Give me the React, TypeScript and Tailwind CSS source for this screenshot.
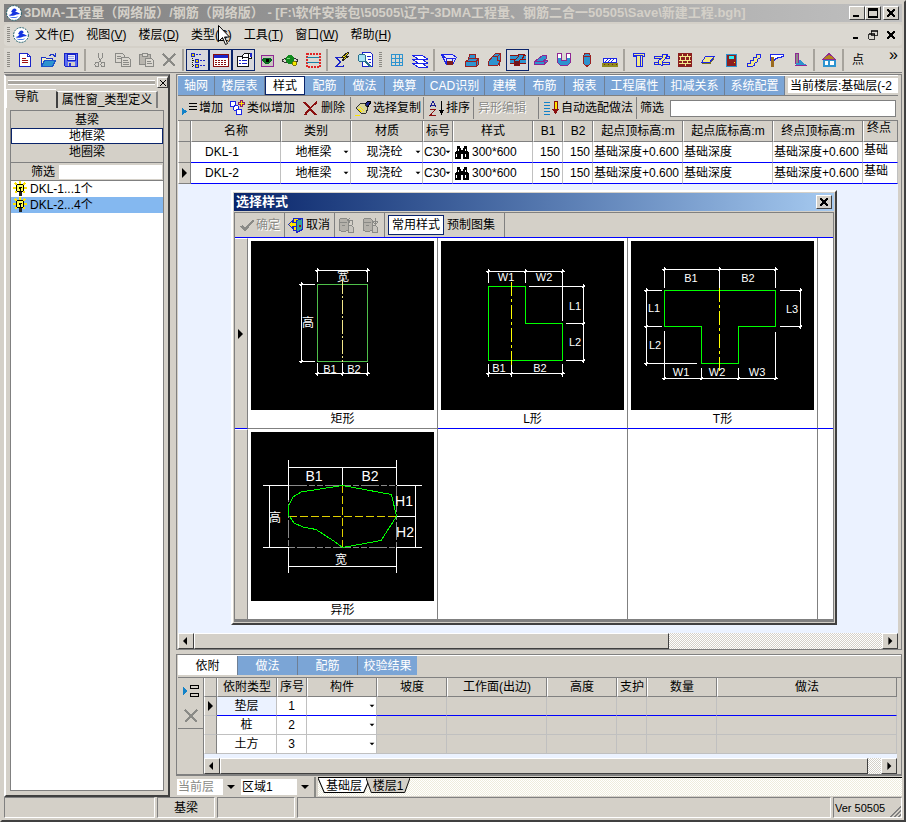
import type { ReactNode } from 'react'
import clsx from 'clsx'

const RAISED = 'border border-white border-r-[#404040] border-b-[#404040] bg-[#d4d0c8]'
const SUNKEN = 'border border-[#808080] border-r-white border-b-white'
const DITHER = 'bg-[repeating-conic-gradient(#ffffff_0_25%,#d4d0c8_0_50%)] bg-[length:2px_2px]'

function Icon({ children, className }: { children: ReactNode; className?: string }) {
  return (
    <svg
      className={clsx('shrink-0', className ?? 'size-4')}
      viewBox="0 0 16 16"
      fill="none"
      strokeWidth={1}
      shapeRendering="crispEdges"
      aria-hidden="true"
    >
      {children}
    </svg>
  )
}

function Logo() {
  return (
    <svg className="size-4 shrink-0" viewBox="0 0 16 16" aria-hidden="true">
      <circle cx="8" cy="8" r="7.4" fill="#fff" stroke="#1f5f6b" strokeDasharray="2 1" />
      <path d="M6.5 4.5c2-2 4.5-.5 4 1.3l-1.5.7c2 .3 4 1.5 5 2.5-3 .3-4 .6-6 1.5-1.5.5-4 .5-5.5-.5 2-.3 3-1 4-2.5L5 7z" fill="#1434e0" />
      <path d="M3 11.5c3 .8 6 .8 9.5-.3-2 2.3-6.5 2.6-9.5.3z" fill="#4a78f0" />
    </svg>
  )
}

function Grip() {
  return (
    <span className="flex w-[9px] shrink-0 justify-center">
      <span className="h-4 w-[3px] bg-[repeating-linear-gradient(#8c8a84_0_1px,#dbd8d1_1px_2px)]" />
    </span>
  )
}

function Arrow({ dir, className }: { dir: 'left' | 'right' | 'down'; className?: string }) {
  const d = { left: 'M6 1v8L2 5z', right: 'M3 0v10l5-5z', down: 'M1 3h8L5 7z' }[dir]
  return (
    <svg className={clsx('shrink-0', className ?? 'size-[10px]')} viewBox="0 0 10 10" aria-hidden="true">
      <path d={d} fill="#000" />
    </svg>
  )
}

/* ---------- main toolbar ---------- */

const icons: Record<string, ReactNode> = {
  新建: (
    <Icon>
      <path d="M2.5 1.5h8l3 3v10h-11z" fill="#fff" stroke="#1b25c8" />
      <path d="M10.5 1.5v3h3" stroke="#1b25c8" />
      <path d="M5 6.500h4M5 8.500h6M5 10.500h6" stroke="#a01010" />
    </Icon>
  ),
  打开: (
    <Icon>
      <path d="M1.5 14.5v-9h4l1 1h6v2" fill="#f5f0c8" stroke="#1b35c8" />
      <path d="M1.5 14.5l3-6h11l-3 6z" fill="#2d93cf" stroke="#1b55c8" />
      <path d="M9 3.5h1v-1h3v1h1v1h1M15.5 1v4" stroke="#1b35c8" />
    </Icon>
  ),
  保存: (
    <Icon>
      <path d="M1.5 1.5h13v13h-12l-1-1z" fill="#5a6cf0" stroke="#1622c8" />
      <path d="M4 2h8v6H4z" fill="#e8e8f8" stroke="#1622c8" />
      <path d="M5 4.5h6M5 6.5h6" stroke="#9aa6e8" />
      <path d="M5 10h7v4H5z" fill="#d4d0c8" />
      <path d="M6 11h2v3H6z" fill="#2433d8" />
    </Icon>
  ),
  剪切: (
    <Icon>
      <path d="M6.5 1v4l3 6M10.5 1v4l-4 6" stroke="#8a8a86" />
      <circle cx="5" cy="12.5" r="2" stroke="#8a8a86" />
      <circle cx="11" cy="12.5" r="2" stroke="#8a8a86" />
    </Icon>
  ),
  复制: (
    <Icon>
      <path d="M.5 1.5h7l2 2v7h-9z" stroke="#8a8a86" />
      <path d="M6.5 5.5h7l2 2v7h-9z" fill="#dbd8d1" stroke="#8a8a86" />
      <path d="M2 4.5h4M2 6.5h4M8 8.5h5M8 10.5h6M8 12.5h6" stroke="#8a8a86" />
    </Icon>
  ),
  粘贴: (
    <Icon>
      <path d="M1.5 2.5h11v10h-11z" fill="#b8b5ae" stroke="#8a8a86" />
      <path d="M4.5 1.5h5v3h-5z" fill="#dbd8d1" stroke="#8a8a86" />
      <path d="M7.5 6.5h6l2 2v6h-8z" fill="#dbd8d1" stroke="#8a8a86" />
      <path d="M9 9.5h4M9 11.5h5" stroke="#8a8a86" />
    </Icon>
  ),
  删除图元: (
    <Icon>
      <path d="M2 2l12 12M14 2L2 14" stroke="#8a8a86" strokeWidth={2} />
    </Icon>
  ),
  导航树: (
    <Icon>
      <path d="M2.5 4v10.500M3 8.500h2M3 13.500h2" stroke="#111" strokeDasharray="1 1" />
      <path d="M1 1h3v3H1zM5 7h3v3H5zM5 12h3v3H5z" fill="#e4d000" stroke="#1b25c8" />
      <path d="M6 2.500h5M10 8.500h6M10 13.500h6" stroke="#1b25c8" strokeDasharray="2 1" />
    </Icon>
  ),
  表格: (
    <Icon>
      <path d="M.5 2.5h15v12H.5z" fill="#fff" stroke="#8a0f0f" />
      <path d="M1 3h14v3H1z" fill="#1b25c8" />
      <path d="M2 8.5h12M2 10.5h12M2 12.5h12" stroke="#8a0f0f" strokeDasharray="2 1" />
    </Icon>
  ),
  属性: (
    <Icon>
      <path d="M1.5 4.5h11v10h-11z" fill="#fff" stroke="#111" />
      <path d="M3 8.5h2M3 11.5h2M6 8.5h5M6 11.5h5" stroke="#1b25c8" />
      <path d="M6 3.5l3-2h3v4H8l-2 1zM12 1h3v5h-3z" fill="#fff" stroke="#111" />
      <path d="M14 1h2v4h-2z" fill="#1b25c8" />
    </Icon>
  ),
  可见性: (
    <Icon>
      <path d="M2 3h12v11H2z" fill="#c9c6c0" stroke="#8f2794" strokeWidth={1} />
      <path d="M3 8l3-2h4l3 2-3 3H6z" fill="#0d7a1a" stroke="#062" />
      <path d="M7 7h3v3H7z" fill="#000" />
    </Icon>
  ),
  动态观察: (
    <Icon>
      <ellipse cx="8" cy="8.5" rx="7.5" ry="2.5" stroke="#333" />
      <circle cx="8" cy="7.5" r="4.5" fill="#118a1e" />
      <path d="M5 6h3v1H5z" fill="#7be07f" />
      <circle cx="12.5" cy="11.5" r="2" fill="#f4ea00" stroke="#7c7400" />
    </Icon>
  ),
  框选: (
    <Icon>
      <path d="M1.5 1.5h13v13h-13z" stroke="#e02525" strokeWidth={2} strokeDasharray="2 1" />
      <path d="M2 5.5h12M2 10.5h12" stroke="#1682a8" />
    </Icon>
  ),
  汇总计算: (
    <Icon>
      <path d="M9.5 7V5.500H1.500L6 10l-4.500 4.500h8V13" stroke="#1b25c8" />
      <path d="M2.500 5.500L7 10l-4 4" stroke="#1b25c8" />
      <path d="M14 0L8 5h3L8 9l7-5h-3l3-3z" fill="#ffe600" stroke="#222" />
    </Icon>
  ),
  查量: (
    <Icon>
      <path d="M5.5.5h8l2 2v12h-10z" fill="#fff" stroke="#1b25c8" />
      <path d="M10 4.5h4M11 7.5h3M12 10.5h2" stroke="#1b25c8" />
      <circle cx="5" cy="6" r="4" fill="#a8e4f4" stroke="#28708c" />
      <path d="M8 9l6 6" stroke="#28708c" strokeWidth={2} />
    </Icon>
  ),
  轴网: (
    <Icon>
      <path d="M2.5 2.5h11v11h-11zM6.5 2v12M10.5 2v12M2 6.5h12M2 10.5h12" stroke="#2d93cf" />
    </Icon>
  ),
  楼层: (
    <Icon>
      <path d="M.5 11.5h10l5 3.500H6z" fill="#fff" stroke="#1b25e8" />
      <path d="M.5 7.5h10l5 3.500H6z" fill="#fff" stroke="#1b25e8" />
      <path d="M.5 3.5h10l5 3.500H6z" fill="#fff" stroke="#1b25e8" />
    </Icon>
  ),
  基坑: (
    <Icon>
      <path d="M.5 2.5h11l4 3-4 7h-6z" fill="#e6e4f4" stroke="#1b25e8" />
      <path d="M1 3l4 3h10M5.500 6v5M11.500 6v4" stroke="#1b25e8" />
      <path d="M6 9h6v4H6z" fill="#7c1c1c" />
    </Icon>
  ),
  独基: (
    <Icon>
      <path d="M5.5 2.5h6v4h3v6l-2 2h-11v-5l3-2z" fill="#2d93cf" stroke="#9a2020" />
      <path d="M2 9.5h10v5M5 6.5h6M12 9l3-2" stroke="#9a2020" />
    </Icon>
  ),
  条基: (
    <Icon>
      <path d="M8.5 1.5h5v8l-3 4h-9v-4l4-5z" fill="#2d93cf" stroke="#9a2020" />
      <path d="M5 4.5h5v4h2v5M10 5l3-3" stroke="#9a2020" />
    </Icon>
  ),
  基梁: (
    <Icon>
      <path d="M0 4h16v8H0z" fill="#2d93cf" />
      <path d="M0 3.5h16M0 7.5h16M0 11.5h16" stroke="#8a0f0f" />
      <path d="M4.500 13.500v-5l4-4v-2h6l-2 4-3 2v5z" fill="#2d93cf" stroke="#8a0f0f" />
      <path d="M5 9h4v4H5z" fill="#6c1420" />
    </Icon>
  ),
  筏板: (
    <Icon>
      <path d="M1.5 12.5v-3l8-6h4v3l-3 2h4v1l-4 3z" fill="#2d93cf" stroke="#8f2794" />
      <path d="M2 9.5h9M11 9v4" stroke="#8f2794" />
    </Icon>
  ),
  集水坑: (
    <Icon>
      <path d="M1.5 1.5h4v7h5v-7h4v9l-3 3h-7l-3-3z" fill="#2d93cf" stroke="#8f2794" />
      <path d="M2 2h3v4H2zM11 2h3v4h-3z" fill="#fff" />
    </Icon>
  ),
  桩: (
    <Icon>
      <path d="M6 1.5h4l1.500 2v8l-3.500 3-3.500-3v-8z" fill="#2d93cf" stroke="#9a2020" />
      <path d="M5 4.5h6" stroke="#9a2020" />
    </Icon>
  ),
  垫层: (
    <Icon>
      <path d="M1.5 6.5h13v4h-13z" fill="#fff" stroke="#1b25e8" />
      <path d="M3 9.5l3-2M6 9.5l3-2M9 9.5l3-2" stroke="#1b25e8" />
      <path d="M0 11h16v4H0z" fill="#8f8a1e" />
      <path d="M2 12.5h13" stroke="#7c1c1c" strokeDasharray="1 3" />
    </Icon>
  ),
  柱: (
    <Icon>
      <path d="M2.5 1.5h11v3h-2v10h-6v-10h-3z" fill="#f2e98c" stroke="#1b25e8" />
      <path d="M2 3.5h10M9.5 4v10" stroke="#1b25e8" />
    </Icon>
  ),
  梁: (
    <Icon>
      <path d="M.5 4.5h15v2H.5zM.5 10.5h15v2H.5z" fill="#f2e98c" stroke="#1b25e8" />
      <path d="M4.5 12.5v-4l4-3V2.500h5l-2 4-3 3v4z" fill="#f2e98c" stroke="#1b25e8" />
    </Icon>
  ),
  墙: (
    <Icon>
      <path d="M1.5 1.5h13v13h-13z" fill="#8c1f1f" stroke="#8c1f1f" />
      <path d="M2 4.5h12M2 8.5h12M2 11.5h12M5.5 2v2M10.5 2v2M3.5 5v3M8.5 5v3M12.5 5v3M5.5 9v2M10.5 9v2M8.5 12v2" stroke="#f2e98c" />
    </Icon>
  ),
  板: (
    <Icon>
      <path d="M5.5 4.5h9l-5 6h-8z" fill="#f2e98c" stroke="#1b25e8" />
      <path d="M2 11.5h8l4-5" stroke="#77711c" />
    </Icon>
  ),
  门窗: (
    <Icon>
      <path d="M3.5 2.5h10v12h-10z" fill="#8c1f1f" stroke="#2d93cf" />
      <path d="M6 4h5v3H6z" fill="#2ff0f4" />
      <path d="M11 10h1v1h-1z" fill="#ffe600" />
    </Icon>
  ),
  楼梯: (
    <Icon>
      <path d="M1.5 14.5v-3h3v-3h3v-3h3v-3h4v3l-3 2v2l-3 2v2l-3 1z" fill="#f2e98c" stroke="#1b25e8" />
    </Icon>
  ),
  挑檐: (
    <Icon>
      <path d="M1.5 2.5h13v2l-8 2-1 2h-4z" fill="#fff" stroke="#1b25e8" />
      <path d="M2 5h3v10H2z" fill="#9a6a20" />
    </Icon>
  ),
  散水: (
    <Icon>
      <path d="M3.5 1.5h3v10h-3z" fill="#8a8a86" stroke="#8f2794" />
      <path d="M7 8l3 1 1 2 4 2H4v-2h3z" fill="#2d93cf" />
      <path d="M3 13.5h12" stroke="#8f2794" />
    </Icon>
  ),
  房间: (
    <Icon>
      <path d="M2.500 7.500h11v6h-11z" fill="#fff" stroke="#2d93cf" strokeWidth={2} />
      <path d="M8 1.500L1.500 7.500h13z" fill="#b3821c" stroke="#8f2794" />
      <path d="M8 8v6" stroke="#2d93cf" strokeWidth={2} />
    </Icon>
  ),
}

const barOne = [
  ['新建', '打开', '保存'],
  ['剪切', '复制', '粘贴', '删除图元'],
  ['导航树', '表格', '属性', '可见性', '动态观察', '框选'],
  ['汇总计算', '查量'],
]
const barTwo = [
  ['轴网', '楼层'],
  ['基坑', '独基', '条基', '基梁', '筏板', '集水坑', '桩', '垫层'],
  ['柱', '梁', '墙', '板', '门窗', '楼梯', '挑檐', '散水'],
  ['房间'],
]
const pressed = ['导航树', '表格', '属性', '基梁']

function ToolGroups({ groups }: { groups: string[][] }) {
  return groups.map((names, i) => (
    <div key={i} className="flex">
      {i > 0 && <span className="mx-[2px] h-[22px] w-[2px] bg-[#a6a39c]" />}
      {names.map((name) => (
        <button
          key={name}
          title={name}
          aria-label={name}
          className={clsx(
            'flex h-[22px] w-[23px] items-center justify-center border',
            pressed.includes(name) ? 'border-[#0a246a] bg-[#d8d8dc]' : 'border-transparent',
          )}
        >
          {icons[name]}
        </button>
      ))}
    </div>
  ))
}

function WinButton({ label, children }: { label: string; children: ReactNode }) {
  return (
    <button aria-label={label} className={clsx('flex h-[14px] w-4 items-center justify-center', RAISED)}>
      <Icon className="size-3">{children}</Icon>
    </button>
  )
}

function TitleBar() {
  return (
    <header className="flex h-[18px] items-center bg-linear-to-r from-[#808080] to-[#c0c0c0] pr-[3px] pl-[2px]">
      <Logo />
      <h1 className="min-w-0 flex-1 truncate pl-[2px] text-[13px] font-bold text-[#d4d0c8]">
        3DMA-工程量（网络版）/钢筋（网络版） - [F:\软件安装包\50505\辽宁-3DMA工程量、钢筋二合一50505\Save\新建工程.bgh]
      </h1>
      <WinButton label="最小化"><path d="M3 11h7v2H3z" fill="#000" /></WinButton>
      <WinButton label="最大化"><path d="M2 2h12v11H2zM2 4h12" stroke="#000" strokeWidth={2} /></WinButton>
      <span className="w-[2px]" />
      <WinButton label="关闭"><path d="M3 3l10 10M13 3L3 13" stroke="#000" strokeWidth={2} /></WinButton>
    </header>
  )
}

const menus = [
  ['文件', 'F'], ['视图', 'V'], ['楼层', 'D'], ['类型', 'C'], ['工具', 'T'], ['窗口', 'W'], ['帮助', 'H'],
]

function MenuBar() {
  return (
    <nav className="relative my-[2px] flex h-[22px] items-center rounded bg-[#dbd8d1]">
      <Grip />
      <Logo />
      {menus.map(([text, key]) => (
        <button key={key} className="px-[6px] whitespace-nowrap">
          {text}(<u>{key}</u>)
        </button>
      ))}
      <span className="flex-1" />
      <button aria-label="最小化子窗口" className="w-[17px]">
        <Icon className="size-3"><path d="M4 11h7v2H4z" fill="#000" /></Icon>
      </button>
      <button aria-label="还原子窗口" className="w-[18px]">
        <Icon className="size-3"><path d="M5.5 2.5h9v6h-9zM2.5 6.5h8v7h-8zM5 3.5h10M2 7.5h9" stroke="#000" /></Icon>
      </button>
      <button aria-label="关闭子窗口" className="w-[17px]">
        <Icon className="size-3"><path d="M3 3l10 10M13 3L3 13" stroke="#000" strokeWidth={2} /></Icon>
      </button>
      <svg className="absolute top-[1px] left-[214px] h-[21px] w-3" viewBox="0 0 12 21" aria-hidden="true">
        <path d="M.5.5v16l4-4 3 7 2-1-3-6.500h5z" fill="#fff" stroke="#000" />
      </svg>
    </nav>
  )
}

function MainToolbar() {
  return (
    <div className="flex h-[25px] items-center border-b border-[#808080] bg-[#dbd8d1]">
      <Grip />
      <ToolGroups groups={barOne} />
      <Grip />
      <ToolGroups groups={barTwo} />
      <span className="mx-[2px] h-[22px] w-[2px] bg-[#a6a39c]" />
      <button className="w-6">点</button>
      <button aria-label="更多" className="ml-auto self-start pr-1 text-[16px] leading-[14px]">»</button>
    </div>
  )
}

/* ---------- navigation panel ---------- */

function Bulb() {
  return (
    <Icon>
      <path d="M8 0v14M1 7h14M3 2l10 10M13 2L3 12" stroke="#ffe600" strokeWidth={2} />
      <circle cx="8" cy="7" r="4" fill="#ffff50" stroke="#000" />
      <path d="M7 11h3v4H7z" fill="#222" />
      <path d="M6.500 6.500h1v1h1v-1h1M8.500 8v3" stroke="#000" />
    </Icon>
  )
}

function NavPanel() {
  const types = ['基梁', '地框梁', '地圈梁']
  const items = ['DKL-1...1个', 'DKL-2...4个']
  return (
    <aside className="flex w-[166px] shrink-0 flex-col border-2 border-[#808080] border-r-[#404040] border-b-[#404040] border-l-white">
      <div className="flex h-[13px] items-center gap-[2px] pl-[2px]">
        <span className="h-[5px] flex-1 border-y border-white bg-[#a9a6a0]" />
        <button aria-label="关闭导航" className={clsx('flex size-[11px] items-center justify-center', RAISED)}>
          <Icon className="size-2"><path d="M2 2l12 12M14 2L2 14" stroke="#000" strokeWidth={2} /></Icon>
        </button>
      </div>
      <div className="flex h-[19px] items-end">
        <button className="h-[19px] w-[50px] border-t border-l border-white pr-[10px] pb-1">导航</button>
        <button className="h-[17px] w-[102px] border border-white border-r-2 border-b-0 border-r-[#808080] border-l-2 border-l-[#404040] whitespace-nowrap">
          属性窗_类型定义
        </button>
      </div>
      <div className="mx-[4px] mt-[2px] mb-1 flex flex-1 flex-col border border-[#808080]">
        <ul className="border-b border-[#808080] pt-px pb-[2px] text-center">
          {types.map((t) => (
            <li key={t}>
              <button
                className={clsx(
                  'block h-4 w-full border',
                  t === '地框梁' ? 'border-[#0a246a] bg-white' : 'border-transparent',
                )}
              >
                {t}
              </button>
            </li>
          ))}
        </ul>
        <label className="flex h-[18px] items-center gap-1 border-b border-[#808080] pr-px pl-5">
          筛选
          <input className="h-[14px] min-w-0 flex-1 bg-white outline-none" />
        </label>
        <ul className="flex-1 bg-white">
          {items.map((t, i) => (
            <li key={t} className={clsx('flex h-4 items-center gap-[2px] pl-px', i === 1 && 'bg-[#84b8f0]')}>
              <Bulb />
              {t}
            </li>
          ))}
        </ul>
      </div>
    </aside>
  )
}

/* ---------- shared controls ---------- */

function Combo({ label, value, center }: { label: string; value: string; center?: boolean }) {
  return (
    <span className="relative block">
      <select
        aria-label={label}
        defaultValue={value}
        className={clsx(
          'block w-full appearance-none bg-transparent outline-none',
          center && 'pr-1 [text-align-last:center]',
        )}
      >
        <option>{value}</option>
      </select>
      <Arrow dir="down" className="pointer-events-none absolute top-1 right-0 size-[6px]" />
    </span>
  )
}

function ScrollBar({ thumb, label }: { thumb: string; label: string }) {
  return (
    <div className={clsx('flex h-4', DITHER)} role="group" aria-label={label}>
      <button aria-label="向左滚动" className={clsx('flex w-4 items-center justify-center', RAISED)}>
        <Arrow dir="left" />
      </button>
      <div className="flex flex-1">
        <span className={clsx(thumb, RAISED)} />
      </div>
      <button aria-label="向右滚动" className={clsx('flex w-4 items-center justify-center', RAISED)}>
        <Arrow dir="right" className="size-2" />
      </button>
    </div>
  )
}

const TH = 'border-r border-r-[#808080] border-l border-l-white border-b border-b-[#808080] bg-[#d4d0c8] p-0 font-normal whitespace-nowrap overflow-hidden'

/* ---------- component table ---------- */

const tabs: [string, string][] = [
  ['轴网', 'w-[37px]'], ['楼层表', 'w-[50px]'], ['样式', 'w-10'], ['配筋', 'w-10'], ['做法', 'w-10'],
  ['换算', 'w-10'], ['CAD识别', 'w-[60px]'], ['建模', 'w-10'], ['布筋', 'w-10'], ['报表', 'w-10'],
  ['工程属性', 'w-[60px]'], ['扣减关系', 'w-[60px]'], ['系统配置', 'w-[60px]'],
]

function TabRow() {
  return (
    <div className="flex h-5 border-t border-white">
      {tabs.map(([name, w]) => (
        <button
          key={name}
          className={clsx(
            'shrink-0 whitespace-nowrap',
            w,
            name === '样式'
              ? 'border border-[#0a246a] bg-white'
              : 'border-r border-[#6f7f94] bg-[#7ba5d6] text-white',
          )}
        >
          {name}
        </button>
      ))}
      <span className="my-[2px] ml-[3px] min-w-0 flex-1 bg-white pl-[2px] leading-4 whitespace-nowrap">
        当前楼层:基础层(-2
      </span>
    </div>
  )
}

function EditBar() {
  const btn = 'flex h-[22px] shrink-0 items-center whitespace-nowrap'
  const sep = 'border-r border-[#808080]'
  return (
    <div className="flex h-[26px] items-center border-t border-b border-[#808080]">
      <button className={clsx(btn, 'w-[51px] gap-px pl-1')}>
        <Icon>
          <path d="M0 8v7l5-3.500z" fill="#1382c8" />
          <path d="M7 3.500h8M7 6.500h8M7 9.500h8" stroke="#000" />
        </Icon>
        增加
      </button>
      <button className={clsx(btn, 'w-[74px] gap-[2px]')}>
        <Icon>
          <circle cx="4" cy="4" r="3" fill="#fff" stroke="#1b25e8" />
          <circle cx="7" cy="8" r="2.5" fill="#fff" stroke="#1b25e8" />
          <circle cx="10" cy="12" r="3" fill="#fff" stroke="#1b25e8" />
          <path d="M12 0v7M8.500 3.500h7" stroke="#8c1f6f" strokeWidth={3} />
          <path d="M12 1v5M9.500 3.500h5" stroke="#ffe600" />
        </Icon>
        类似增加
      </button>
      <button className={clsx(btn, sep, 'w-12 gap-[2px]')}>
        <Icon><path d="M1 2l12 13M14 2C9 6 5 10 2 15" stroke="#8a1010" strokeWidth={2} /></Icon>
        删除
      </button>
      <button className={clsx(btn, sep, 'w-[73px] gap-[2px] pl-1')}>
        <Icon>
          <path d="M10 4l3-3 3 1-3 5z" fill="#1b2590" stroke="#000" />
          <path d="M5 4l4-1 4 5-2 5-4 1-6-6z" fill="#d8d49a" stroke="#333" />
          <path d="M3 9l4 3M5 7l4 4" stroke="#ffe600" />
          <path d="M0 15h5v1H0z" fill="#ffe600" />
        </Icon>
        选择复制
      </button>
      <button className={clsx(btn, sep, 'w-[50px] gap-px pl-[5px]')}>
        <Icon>
          <path d="M1 7l3-6 3 6M2 5h4" stroke="#1b1b90" />
          <path d="M1 9.5h5L1.500 15H7" stroke="#8a1010" />
          <path d="M12.5 1v13" stroke="#000" />
          <path d="M10 10h5l-2.500 5z" fill="#000" />
        </Icon>
        排序
      </button>
      <button disabled className={clsx(btn, sep, 'w-[65px] pl-1 text-[#8a8a86] [text-shadow:1px_1px_0_white]')}>
        异形编辑
      </button>
      <button className={clsx(btn, sep, 'w-[98px] gap-[2px] pl-1')}>
        <Icon>
          <path d="M1 2.5h6M1 5.5h6M1 8.5h6M1 11.5h6M1 14.5h6" stroke="#1382c8" />
          <path d="M11 1h3v9h-3z" fill="#ffe600" stroke="#8a1010" />
          <path d="M9 9h7l-3.500 5z" fill="#8a1010" />
        </Icon>
        自动选配做法
      </button>
      <label className="flex min-w-0 flex-1 items-center gap-[6px] pr-[2px] pl-[3px] whitespace-nowrap">
        筛选
        <input className="h-[17px] min-w-0 flex-1 border border-[#808080] bg-white outline-none" />
      </label>
    </div>
  )
}

function Binoculars() {
  return (
    <Icon>
      <path d="M3 2h3v2h1v2h2V4h1V2h3v4l2 3v6H9v-5H7v5H1V9l2-3z" fill="#000" />
      <path d="M2.5 10v3M11.5 10v3M4.5 5v2M11.5 5v2" stroke="#fff" />
    </Icon>
  )
}

const heads = ['名称', '类别', '材质', '标号', '样式', 'B1', 'B2', '起点顶标高:m', '起点底标高:m', '终点顶标高:m']

function ComponentTable() {
  const td = 'border-r border-r-[#c0c0c0] border-b border-b-[#0000ff] bg-white p-0 px-px whitespace-nowrap overflow-hidden'
  return (
    <table className="w-full table-fixed border-separate border-spacing-0">
      <colgroup>
        <col className="w-[13px]" />
        <col className="w-[90px]" />
        <col className="w-[70px]" />
        <col className="w-[72px]" />
        <col className="w-[30px]" />
        <col className="w-20" />
        <col className="w-[30px]" />
        <col className="w-[30px]" />
        <col className="w-[90px]" />
        <col className="w-[90px]" />
        <col className="w-[90px]" />
        <col />
      </colgroup>
      <thead>
        <tr className="h-[21px]">
          <th className={TH} />
          {heads.map((h) => <th key={h} className={TH}>{h}</th>)}
          <th className={clsx(TH, 'text-left align-top')}><span className="pl-[3px]">终点</span></th>
        </tr>
      </thead>
      <tbody>
        {['DKL-1', 'DKL-2'].map((name, i) => (
          <tr key={name} className="h-[21px]">
            <td className={clsx(TH, 'border-b-[#0000ff]')}>{i === 1 && <Arrow dir="right" />}</td>
            <td className={clsx(td, 'pl-[14px]')}>{name}</td>
            <td className={td}><Combo label="类别" value="地框梁" center /></td>
            <td className={td}><Combo label="材质" value="现浇砼" center /></td>
            <td className={td}><Combo label="标号" value="C30" /></td>
            <td className={clsx(td, i === 1 && 'bg-[#ebf2ff]')}>
              <span className="flex items-center gap-[2px]"><Binoculars />300*600</span>
            </td>
            <td className={clsx(td, 'pr-[2px] text-right')}>150</td>
            <td className={clsx(td, 'pr-[2px] text-right')}>150</td>
            <td className={td}>基础深度+0.600</td>
            <td className={td}>基础深度</td>
            <td className={td}>基础深度+0.600</td>
            <td className={clsx(td, 'align-top leading-4')}>基础</td>
          </tr>
        ))}
      </tbody>
    </table>
  )
}

/* ---------- section style dialog ---------- */

function Drawing({ name, children }: { name: string; children: ReactNode }) {
  return (
    <figure className="flex flex-col items-center pt-[3px]">
      <svg
        className="h-[169px] w-[183px] bg-black"
        viewBox="0 0 183 169"
        fill="none"
        stroke="#fff"
        shapeRendering="crispEdges"
        role="img"
        aria-label={name}
      >
        {children}
      </svg>
      <figcaption className="leading-[18px]">{name}</figcaption>
    </figure>
  )
}

function Labels({ size = 11, items }: { size?: number; items: [string, number, number][] }) {
  return (
    <g fill="#fff" stroke="none" fontSize={size} textAnchor="middle">
      {items.map(([t, x, y]) => <text key={t} x={x} y={y + 4}>{t}</text>)}
    </g>
  )
}

function RectSection() {
  return (
    <Drawing name="矩形">
      <path d="M64 29.5h55M66.5 27v14M116.5 27v14M50.5 41v81M48 43.5h16M48 120.5h16M64 132.5h55M66.5 122v13M91.5 122v13M116.5 122v13" />
      <path d="M65 31l3-3M115 31l3-3M49 45l3-3M49 122l3-3M65 134l3-3M90 134l3-3M115 134l3-3" />
      <path d="M66.5 43.5h50v77h-50z" stroke="#4fc04a" />
      <path d="M91.5 39v82" stroke="#f4e88a" strokeDasharray="14 2 2 2" />
      <Labels size={12} items={[['宽', 92, 36], ['高', 57, 82]]} />
      <Labels items={[['B1', 79, 128], ['B2', 103, 128]]} />
    </Drawing>
  )
}

function LSection() {
  return (
    <Drawing name="L形">
      <path d="M45 30.5h79M47.5 28v14M84.5 28v14M121.5 28v52M88 45.5h56M142.5 43v79M125 82.5h19M125 119.5h19M45 132.5h79M47.5 123v13M70.5 123v13M121.5 123v13" />
      <path d="M46 32l3-3M83 32l3-3M120 32l3-3M141 47l3-3M141 84l3-3M141 121l3-3M46 134l3-3M69 134l3-3M120 134l3-3" />
      <path d="M47.5 45.5h37v37h37v37h-74z" stroke="#00ff00" />
      <path d="M70.5 41v83" stroke="#ffff00" strokeDasharray="14 3 3 3" />
      <Labels items={[['W1', 65, 36], ['W2', 103, 36], ['L1', 134, 65], ['L2', 134, 101], ['B1', 58, 127], ['B2', 99, 127]]} />
    </Drawing>
  )
}

function TSection() {
  return (
    <Drawing name="T形">
      <path d="M31 28.5h116M33.5 26v21M88.5 26v21M144.5 26v21M15.5 47v78M13 49.5h18M13 85.5h18M13 122.5h53M33.5 90v49M70.5 127v12M107.5 127v12M144.5 91v48M31 137.5h116M169.5 47v41M149 49.5h22M149 85.5h22" />
      <path d="M32 30l3-3M87 30l3-3M143 30l3-3M14 51l3-3M14 87l3-3M14 124l3-3M32 139l3-3M69 139l3-3M106 139l3-3M143 139l3-3M168 51l3-3M168 87l3-3" />
      <path d="M33.5 49.5h111v36h-37v37h-37v-37h-37z" stroke="#00ff00" />
      <path d="M88.5 47v84" stroke="#ffff00" strokeDasharray="14 3 3 3" />
      <Labels
        items={[
          ['B1', 60, 37], ['B2', 117, 37], ['L1', 23, 67], ['L2', 24, 104], ['L3', 161, 68],
          ['W1', 50, 131], ['W2', 86, 131], ['W3', 126, 131],
        ]}
      />
    </Drawing>
  )
}

function FreeSection() {
  return (
    <Drawing name="异形">
      <path d="M37.5 53.5h108v62h-108z" stroke="#8a8a8a" strokeDasharray="18 2 6 2 6 2" />
      <path d="M37.5 28v40M145.5 28v25M37.5 115v26M145.5 115v26M37.5 35.5h108M91.5 35v18M12 53.5h25M146 53.5h25M12 115.5h25M146 115.5h25M18.5 53v62M164.5 53v62M146 84.5h18M37.5 134.5h108" />
      <path d="M37.5 84.5h108M91.5 53v62" stroke="#e0d000" strokeDasharray="8 3" />
      <path d="M91.5 53.5l49 9 5 22-15.500 24-38.500 7-9.500-7-17-11-13-2.500-9-4-5.500-8v-9l4.500-9 8-5z" stroke="#00ff00" />
      <Labels size={14} items={[['B1', 63, 45], ['B2', 119, 45], ['H1', 153, 70], ['H2', 154, 101]]} />
      <Labels size={12} items={[['高', 24, 86], ['宽', 90, 128]]} />
    </Drawing>
  )
}

function DiskIcon({ down }: { down?: boolean }) {
  return (
    <Icon>
      <path d="M1 3l2-2h5l2 2v10l-2 1H3l-2-1z" fill="#b4b1aa" stroke="#8a8a86" />
      <path d="M2 5.5h7M4 8.5h3" stroke="#8a8a86" />
      <path d="M10.5 8.5h3l2 2v5h-5z" fill="#c8c5be" stroke="#8a8a86" />
      <path d={down ? 'M11 4.500h5M13.500 1v5M11 5l2.500 2 2.500-2' : 'M10 3.500h4v4M12 1l-2 2.500 2 2'} stroke="#8a8a86" />
    </Icon>
  )
}

function StyleDialog() {
  const cell = 'h-[191px] border-r border-r-[#808080] border-b'
  const gutter = 'flex h-[191px] items-center border-r border-r-[#808080] border-b border-b-[#0000ff] border-t border-t-white bg-[#d4d0c8]'
  return (
    <section
      role="dialog"
      aria-labelledby="dlg-title"
      className="absolute top-[6px] left-[53px] w-[606px] border-2 border-white border-r-[#404040] border-b-[#404040] bg-[#d4d0c8] p-px"
    >
      <div className="flex h-[18px] items-center bg-linear-to-r from-[#0a246a] to-[#a6caf0] px-[2px]">
        <h2 id="dlg-title" className="flex-1 text-[13px] font-bold text-white">选择样式</h2>
        <WinButton label="关闭对话框"><path d="M3 3l10 10M13 3L3 13" stroke="#000" strokeWidth={2} /></WinButton>
      </div>
      <div className="mt-px border border-[#808080] border-b-2">
        <div className="flex h-[25px] items-center border-b border-[#0000ff]">
          <button disabled className="flex h-6 w-[50px] items-center gap-px border-r border-[#808080] pl-1 text-[#8a8a86] [text-shadow:1px_1px_0_white]">
            <Icon><path d="M1 9l3-1 2 3 8-9 1 2-9 11z" fill="#8a8a86" /></Icon>
            确定
          </button>
          <button className="flex h-6 w-[50px] items-center gap-[2px] border-r border-[#808080] pl-[3px]">
            <Icon>
              <path d="M5.500 1.500h8v12h-8z" fill="#ffe600" stroke="#1b25c8" />
              <path d="M8.500 3.500l6-2v11l-6 3z" fill="#3aa39a" stroke="#1b25c8" />
              <path d="M.5 7.500l4-4v2h4v4h-4v2z" fill="#ffe600" stroke="#1b25c8" />
              <path d="M11 8h2v2h-2z" fill="#a01010" />
            </Icon>
            取消
          </button>
          <div className="flex h-6 w-[50px] items-center gap-2 border-r border-[#808080] pl-[3px]">
            <button disabled aria-label="导出"><DiskIcon /></button>
            <button disabled aria-label="导入"><DiskIcon down /></button>
          </div>
          <button className="ml-[3px] h-5 w-14 border border-[#0a246a] bg-white whitespace-nowrap">常用样式</button>
          <button className="h-6 w-[61px] border-r border-[#808080] pr-[6px] whitespace-nowrap">预制图集</button>
        </div>
        <div className="grid grid-cols-[13px_190px_190px_190px_1fr] bg-white">
          <div className={gutter}><Arrow dir="right" /></div>
          <div className={clsx(cell, 'border-b-[#808080]')}><RectSection /></div>
          <div className={clsx(cell, 'border-b-[#0000ff]')}><LSection /></div>
          <div className={clsx(cell, 'border-b-[#0000ff]')}><TSection /></div>
          <div className="border-b border-[#0000ff]" />
          <div className={clsx(gutter, 'border-b-[#808080]')} />
          <div className={clsx(cell, 'border-b-[#808080]')}><FreeSection /></div>
          <div className={clsx(cell, 'border-b-[#808080]')} />
          <div className={clsx(cell, 'border-b-[#808080]')} />
          <div className="border-b border-[#808080]" />
        </div>
      </div>
    </section>
  )
}

/* ---------- attachment panel ---------- */

const depHeads = ['依附类型', '序号', '构件', '坡度', '工作面(出边)', '高度', '支护', '数量', '做法']

function DependPanel() {
  const td = 'border-r border-r-[#c0c0c0] border-b p-0 px-px text-center'
  return (
    <section className="mt-1 border border-[#808080] border-b-2 bg-[#d4d0c8] pl-px">
      <div className="mb-[2px] flex h-5 border-t border-white">
        <button className="w-[59px] bg-white">依附</button>
        {['做法', '配筋', '校验结果'].map((t) => (
          <button key={t} className="w-[60px] border-l border-[#6f7f94] bg-[#7ba5d6] text-white">{t}</button>
        ))}
      </div>
      <div className="flex border-t border-[#808080] pr-1">
        <div className="w-[26px] shrink-0 border-r border-[#808080]">
          <div className="flex h-[51px] flex-col items-center justify-around border-b border-[#808080]">
            <button aria-label="添加依附">
              <Icon>
                <path d="M0 4v8l5-4z" fill="#1382c8" />
                <path d="M7.500 2.500h8v3h-8zM7.500 10.500h8v3h-8z" stroke="#000" />
              </Icon>
            </button>
            <button aria-label="删除依附">
              <Icon><path d="M2 2l12 12M14 2L2 14" stroke="#8a8a86" strokeWidth={2} /></Icon>
            </button>
          </div>
        </div>
        <div className="min-w-0 flex-1 bg-[#ebf2ff]">
          <table className="mb-1 w-full table-fixed border-separate border-spacing-0">
            <colgroup>
              <col className="w-[13px]" />
              <col className="w-[60px]" />
              <col className="w-[30px]" />
              <col className="w-[70px]" />
              <col className="w-[70px]" />
              <col className="w-[100px]" />
              <col className="w-[70px]" />
              <col className="w-[30px]" />
              <col className="w-[70px]" />
              <col />
            </colgroup>
            <thead>
              <tr className="h-[19px]">
                <th className={clsx(TH, 'border-b-[#0000ff]')} />
                {depHeads.map((h) => <th key={h} className={clsx(TH, 'border-b-[#0000ff]')}>{h}</th>)}
              </tr>
            </thead>
            <tbody>
              {['垫层', '桩', '土方'].map((t, i) => {
                const line = i === 0 ? 'border-b-[#0000ff]' : 'border-b-[#c0c0c0]'
                return (
                  <tr key={t} className="h-[19px]">
                    <td className={clsx(TH, 'border-b-[#c0c0c0]')}>{i === 0 && <Arrow dir="right" />}</td>
                    <td className={clsx(td, line, i === 0 ? 'bg-[#ebf2ff]' : 'bg-white')}>{t}</td>
                    <td className={clsx(td, line, 'bg-white')}>{i + 1}</td>
                    <td className={clsx(td, line, 'bg-white')}><Combo label="构件" value="" /></td>
                    {depHeads.slice(3).map((h) => <td key={h} className={clsx(td, line, 'bg-[#d4d0c8]')} />)}
                  </tr>
                )
              })}
            </tbody>
          </table>
          <ScrollBar thumb="w-[98%]" label="依附表水平滚动" />
        </div>
      </div>
    </section>
  )
}

function PickBox({ label, value, className }: { label: string; value: string; className: string }) {
  return (
    <span className={clsx('relative h-4 bg-white', className)}>
      <select aria-label={label} defaultValue={value} className="block h-4 w-full appearance-none pl-px outline-none">
        <option>{value}</option>
      </select>
      <span className="pointer-events-none absolute top-0 right-0 flex h-4 w-[15px] items-center justify-center bg-[#d4d0c8]">
        <Arrow dir="down" />
      </span>
    </span>
  )
}

function FloorTab({ name, active }: { name: string; active?: boolean }) {
  return (
    <button className={clsx('relative h-[15px] whitespace-nowrap', active ? 'w-[52px]' : '-ml-1 w-11')}>
      <svg className="absolute inset-0 size-full" viewBox="0 0 50 15" preserveAspectRatio="none" aria-hidden="true">
        <path d="M0 0l6 14.500h38L50 0" fill={active ? '#fff' : '#d4d0c8'} stroke="#000" />
      </svg>
      <span className="relative leading-[13px]">{name}</span>
    </button>
  )
}

function FloorBar() {
  return (
    <div className="flex h-[21px] items-center pl-px">
      <PickBox label="楼层范围" value="当前层" className="w-[61px] text-[#8a8a86]" />
      <PickBox label="区域" value="区域1" className="ml-[3px] w-[71px]" />
      <span className="mx-[2px] h-5 w-[2px] bg-[#8a8a86]" />
      <div className="flex h-[19px] flex-1 items-start border-t border-black bg-[repeating-conic-gradient(#ffffff_0_25%,#eeecdc_0_50%)] bg-[length:2px_2px]">
        <FloorTab name="基础层" active />
        <FloorTab name="楼层1" />
      </div>
    </div>
  )
}

function StatusBar() {
  return (
    <footer className="flex h-[21px] gap-[2px]">
      <span className={clsx('w-[151px]', SUNKEN)} />
      <span className={clsx('w-[58px] text-center leading-5', SUNKEN)}>基梁</span>
      <span className={clsx('w-[78px]', SUNKEN)} />
      <span className={clsx('flex-1', SUNKEN)} />
      <span className={clsx('relative w-[69px] pl-px text-[11px] leading-5 whitespace-nowrap', SUNKEN)}>
        Ver 50505
        <svg className="absolute right-0 bottom-0 size-3" viewBox="0 0 12 12" stroke="#808080" aria-hidden="true">
          <path d="M1 12L12 1M2 12L12 2M5 12l7-7M6 12l6-6M9 12l3-3M10 12l2-2" />
        </svg>
      </span>
    </footer>
  )
}

export default function App() {
  return (
    <div className="flex min-h-screen flex-col border-2 border-[#d4d0c8] border-r-[#404040] border-b-[#404040] bg-[#d4d0c8] p-[2px] font-['Liberation_Sans','Noto_Sans_CJK_SC',sans-serif] text-[12px] leading-[14px] text-black">
      <TitleBar />
      <MenuBar />
      <MainToolbar />
      <div className="flex flex-1 gap-[6px] pt-px">
        <NavPanel />
        <main className="flex min-w-0 flex-1 flex-col">
          <div className="flex flex-1 flex-col border border-[#808080] pr-[3px] pl-px">
            <TabRow />
            <EditBar />
            <ComponentTable />
            <div className="relative min-h-[448px] flex-1 bg-[#ebf2ff]">
              <StyleDialog />
            </div>
            <ScrollBar thumb="w-[69%]" label="构件表水平滚动" />
          </div>
          <DependPanel />
          <FloorBar />
        </main>
      </div>
      <StatusBar />
    </div>
  )
}
